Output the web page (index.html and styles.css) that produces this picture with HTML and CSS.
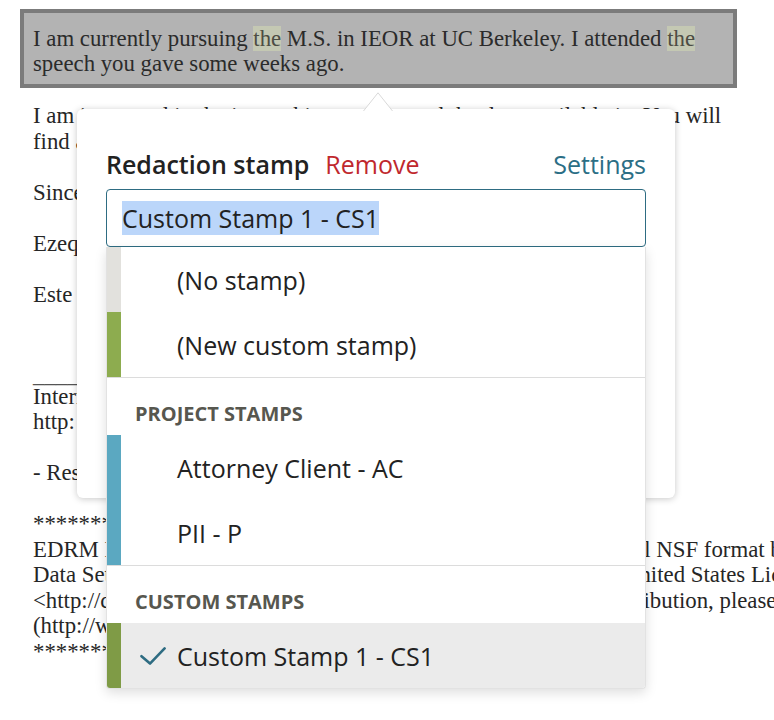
FILE: index.html
```html
<!DOCTYPE html>
<html lang="en">
<head>
<meta charset="utf-8">
<title>Redaction stamp</title>
<link rel="stylesheet" href="styles.css">
</head>
<body>
<div class="page">
  <div class="quote">I am currently pursuing <mark>the</mark> M.S. in IEOR at UC Berkeley. I attended <mark>the</mark><br>speech you gave some weeks ago.</div>

  <div class="doc">
    <div class="split cut-will"><span class="head">I am interested in the internship program and the data available in your lab.</span><span class="tail">You will</span></div>
    <div class="line para">find attached my resume and a short description of my research.</div>
    <div class="line para">Sincerely,</div>
    <div class="line para">Ezequiel</div>
    <div class="line para2">Este mensaje es confidencial.</div>
    <div class="line rule">______________________________________________</div>
    <div class="line">Internet Explorer</div>
    <div class="line para">http: www.berkeley.edu</div>
    <div class="line para">- Resume attached</div>
    <div class="line">**********************************************</div>
    <div class="split cut-nsf"><span class="head">EDRM Enron Email Data Set has been produced in EML, PST and</span><span class="tail">email NSF format by ZL Technologies</span></div>
    <div class="split cut-lic"><span class="head">Data Set is licensed under a Creative Commons Attribution 3.0</span><span class="tail">United States License</span></div>
    <div class="split cut-dist"><span class="head">&lt;http://creativecommons.org/licenses/by/3.0/us/&gt;. To provide attri</span><span class="tail">distribution, please cite</span></div>
    <div class="line">(http://www.edrm.net)</div>
    <div class="line">**********************************************</div>
  </div>

  <div class="popover">
    <svg class="arrow" width="30" height="19" viewBox="0 0 30 19" aria-hidden="true"><path d="M0.5 19 L15 0.8 L29.5 19" fill="#fff" stroke="#d9d9d9" stroke-width="1"/></svg>
    <div class="pop-head">
      <span class="pop-title">Redaction stamp</span>
      <span class="pop-remove">Remove</span>
      <span class="pop-settings">Settings</span>
    </div>
    <div class="combo">
      <div class="combo-input"><span class="sel">Custom Stamp 1 - CS1</span></div>
      <div class="menu">
        <div class="item"><span class="bar bar-none"></span><span class="slot"></span><span class="label">(No stamp)</span></div>
        <div class="item"><span class="bar bar-green"></span><span class="slot"></span><span class="label">(New custom stamp)</span></div>
        <div class="group">Project stamps</div>
        <div class="item"><span class="bar bar-blue"></span><span class="slot"></span><span class="label">Attorney Client - AC</span></div>
        <div class="item"><span class="bar bar-blue"></span><span class="slot"></span><span class="label">PII - P</span></div>
        <div class="group">Custom stamps</div>
        <div class="item selected"><span class="bar bar-green2"></span><span class="slot"><svg class="check" width="26" height="18" viewBox="0 0 26 18" aria-hidden="true"><path d="M1.5 9.2 L10 16.6 L24.6 1.4" fill="none" stroke="#2e6c82" stroke-width="2.6" stroke-linecap="round" stroke-linejoin="round"/></svg></span><span class="label">Custom Stamp 1 - CS1</span></div>
      </div>
    </div>
  </div>
</div>
</body>
</html>
```

FILE: styles.css
```css
* { box-sizing: border-box; }
html, body { margin: 0; padding: 0; }
body {
  width: 774px;
  height: 720px;
  overflow: hidden;
  background: #fff;
  color: #222;
  font-family: "Liberation Serif", "Times New Roman", serif;
}
.page {
  position: relative;
  height: 720px;
  padding: 9px 0 0 20px;
  overflow: hidden;
}
.quote {
  width: 717px;
  height: 79px;
  border: 4px solid #7b7b7b;
  background: #b3b3b3;
  padding: 13px 9px 0;
  font-size: 22.8px;
  line-height: 25px;
  color: #2b2b2b;
  white-space: nowrap;
}
.quote mark {
  background: #c4c8b3;
  color: #4d4d44;
}
.doc {
  margin-top: 15px;
  padding-left: 13px;
  font-size: 22.8px;
  line-height: 25.5px;
  color: #262626;
  white-space: nowrap;
}
.line { height: 25.5px; }
.rule { position: relative; top: 4px; color: #555; }
.para { margin-bottom: 25.5px; }
.para2 { margin-bottom: 51px; }
.split { display: flex; height: 25.5px; }
.split .head { flex: none; overflow: hidden; }
.cut-will .head { width: 610px; }
.cut-nsf .head { width: 567px; }
.cut-lic .head { width: 590px; }
.cut-dist .head { width: 570px; }

.popover {
  position: absolute;
  left: 77px;
  top: 109px;
  width: 598px;
  height: 389px;
  background: #fff;
  border-radius: 6px;
  box-shadow: 0 1px 7px rgba(0, 0, 0, 0.22);
  padding: 38px 29px 0 29px;
  font-family: "Open Sans", "Noto Sans", sans-serif;
  z-index: 2;
}
.arrow {
  position: absolute;
  left: 286px;
  top: -17px;
  display: block;
}
.pop-head {
  display: flex;
  align-items: baseline;
  font-size: 25px;
  line-height: 34px;
}
.pop-title { font-weight: 600; color: #222; }
.pop-remove { color: #c0282d; margin-left: 16px; }
.pop-settings { color: #2b6e85; margin-left: auto; }

.combo {
  position: relative;
  margin-top: 8px;
}
.combo-input {
  height: 58px;
  border: 1px solid #2e6c82;
  border-radius: 4px;
  padding: 11px 15px;
  font-size: 25px;
  line-height: 34px;
  color: #222;
}
.sel {
  display: inline-block;
  background: #bbd6fa;
}
.menu {
  position: absolute;
  top: 100%;
  left: 0;
  right: 0;
  background: #fff;
  border: 1px solid #e2e2e2;
  border-top: 0;
  border-radius: 0 0 4px 4px;
  box-shadow: 0 4px 12px rgba(0, 0, 0, 0.13);
  overflow: hidden;
  z-index: 3;
}
.item {
  display: flex;
  align-items: center;
  height: 65px;
  font-size: 25px;
  line-height: 34px;
  color: #222;
}
.item.selected { background: #ebebeb; }
.bar {
  flex: none;
  width: 14px;
  align-self: stretch;
}
.bar-none { background: #e2e1dd; }
.bar-green { background: #8dac4f; }
.bar-green2 { background: #7f9b46; }
.bar-blue { background: #5ba8c1; }
.slot {
  flex: none;
  width: 56px;
  display: flex;
  align-items: center;
  padding-left: 19px;
}
.check { display: block; }
.group {
  border-top: 1px solid #dcdcdc;
  height: 58px;
  padding: 22px 0 0 28px;
  font-size: 20px;
  line-height: 27px;
  font-weight: 700;
  text-transform: uppercase;
  color: #57574f;
}
```
